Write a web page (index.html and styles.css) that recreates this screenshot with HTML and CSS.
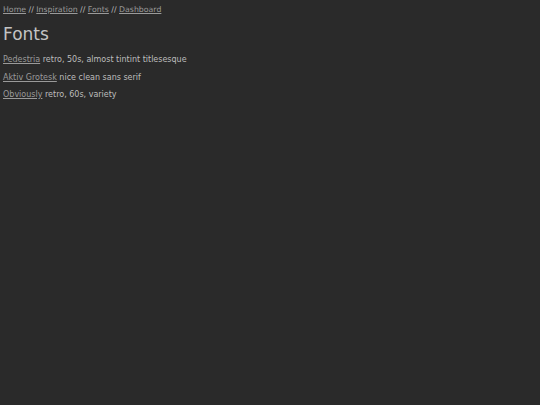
FILE: index.html
```html
<!DOCTYPE html>
<html>
<head>
<meta charset="utf-8">
<link rel="stylesheet" href="styles.css">
</head>
<body>
<nav class="crumbs"><a href="#">Home</a> // <a href="#">Inspiration</a> // <a href="#">Fonts</a> // <a href="#">Dashboard</a></nav>
<h1 class="title">Fonts</h1>
<p class="item"><a href="#">Pedestria</a> retro, 50s, almost tintint titlesesque</p>
<p class="item"><a href="#">Aktiv Grotesk</a> nice clean sans serif</p>
<p class="item"><a href="#">Obviously</a> retro, 60s, variety</p>
</body>
</html>
```
FILE: styles.css
```css
html { background: #2a2a2a; }
body {
  margin: 0;
  padding: 4px 3px;
  font-family: "DejaVu Sans", sans-serif;
  font-size: 8px;
  color: #bdbdbd;
}
a { color: #9a9a9a; }
.crumbs { line-height: 12px; font-size: 7.8px; }
.title { font-size: 17px; font-weight: normal; color: #c4c4c4; margin: 8px 0 11px; line-height: 20px; }
.item { margin: 0 0 7.5px; line-height: 10px; }
```
